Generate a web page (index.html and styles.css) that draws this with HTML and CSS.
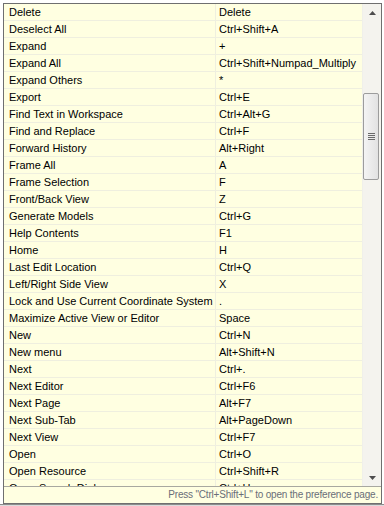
FILE: index.html
```
<!DOCTYPE html>
<html lang="en">
<head>
  <meta charset="UTF-8">
  <title>Key Assist</title>
  <link rel="stylesheet" href="styles.css">
</head>
<body>

  <div class="popup">
    <div class="cuerpo">
      <div class="lista">
        <table class="teclas">
          <tr><td>Delete</td><td>Delete</td></tr>
          <tr><td>Deselect All</td><td>Ctrl+Shift+A</td></tr>
          <tr><td>Expand</td><td>+</td></tr>
          <tr><td>Expand All</td><td>Ctrl+Shift+Numpad_Multiply</td></tr>
          <tr><td>Expand Others</td><td>*</td></tr>
          <tr><td>Export</td><td>Ctrl+E</td></tr>
          <tr><td>Find Text in Workspace</td><td>Ctrl+Alt+G</td></tr>
          <tr><td>Find and Replace</td><td>Ctrl+F</td></tr>
          <tr><td>Forward History</td><td>Alt+Right</td></tr>
          <tr><td>Frame All</td><td>A</td></tr>
          <tr><td>Frame Selection</td><td>F</td></tr>
          <tr><td>Front/Back View</td><td>Z</td></tr>
          <tr><td>Generate Models</td><td>Ctrl+G</td></tr>
          <tr><td>Help Contents</td><td>F1</td></tr>
          <tr><td>Home</td><td>H</td></tr>
          <tr><td>Last Edit Location</td><td>Ctrl+Q</td></tr>
          <tr><td>Left/Right Side View</td><td>X</td></tr>
          <tr><td>Lock and Use Current Coordinate System</td><td>.</td></tr>
          <tr><td>Maximize Active View or Editor</td><td>Space</td></tr>
          <tr><td>New</td><td>Ctrl+N</td></tr>
          <tr><td>New menu</td><td>Alt+Shift+N</td></tr>
          <tr><td>Next</td><td>Ctrl+.</td></tr>
          <tr><td>Next Editor</td><td>Ctrl+F6</td></tr>
          <tr><td>Next Page</td><td>Alt+F7</td></tr>
          <tr><td>Next Sub-Tab</td><td>Alt+PageDown</td></tr>
          <tr><td>Next View</td><td>Ctrl+F7</td></tr>
          <tr><td>Open</td><td>Ctrl+O</td></tr>
          <tr><td>Open Resource</td><td>Ctrl+Shift+R</td></tr>
          <tr><td>Open Search Dialog</td><td>Ctrl+H</td></tr>
        </table>
      </div>

      <!-- Barra de desplazamiento -->
      <div class="scroll">
        <div class="flecha">
          <svg width="7" height="4" viewBox="0 0 7 4"><path d="M3.5 0 L7 4 L0 4 Z" fill="#4d4d4d"/></svg>
        </div>
        <div class="pista">
          <div class="pulgar">
            <span></span><span></span><span></span><span></span>
          </div>
        </div>
        <div class="flecha">
          <svg width="7" height="4" viewBox="0 0 7 4"><path d="M0 0 L7 0 L3.5 4 Z" fill="#4d4d4d"/></svg>
        </div>
      </div>
    </div>

    <div class="estado">Press "Ctrl+Shift+L" to open the preference page.</div>
  </div>

  <div class="fondo"></div>

</body>
</html>
```
FILE: styles.css
```
body {
  margin: 0;
  padding: 3px 0 0 3px;
  background-color: #ffffff;
  font-family: Tahoma, 'Liberation Sans', sans-serif;
  font-size: 11px;
  overflow: hidden;
}

.popup {
  width: 377px;
  height: 499px;
  border: 1px solid #6f6f6f;
  background-color: #ffffe1;
  display: flex;
  flex-direction: column;
}

.cuerpo {
  display: flex;
  height: 482px;
}

.lista {
  width: 358px;
  overflow: hidden;
}

.teclas {
  border-collapse: collapse;
  width: 358px;
  table-layout: fixed;
}

.teclas td {
  height: 16px;
  padding: 0;
  line-height: 16px;
  border-bottom: 1px solid #efefdf;
  white-space: nowrap;
  overflow: hidden;
  color: #000;
}

.teclas td:first-child {
  width: 206px;
  padding-left: 5px;
  border-right: 1px solid #efefdf;
}

.teclas td:last-child {
  padding-left: 3px;
}

/* Barra de desplazamiento */
.scroll {
  width: 18px;
  display: flex;
  flex-direction: column;
  background-color: #f4f3ee;
  border-left: 1px solid #f0f0ea;
}

.flecha {
  height: 17px;
  display: flex;
  justify-content: center;
  align-items: center;
}

.pista {
  flex: 1;
}

.pulgar {
  margin-top: 72px;
  width: 14px;
  height: 85px;
  border: 1px solid #9c9c9c;
  border-radius: 2px;
  background: linear-gradient(to right, #f4f4f4, #e2e2e2);
  display: flex;
  flex-direction: column;
  justify-content: center;
  align-items: center;
  gap: 1px;
}

.pulgar span {
  width: 7px;
  height: 1px;
  background-color: #6a6a6a;
}

.estado {
  border-top: 1px solid #a8a8a0;
  height: 16px;
  line-height: 16px;
  text-align: right;
  padding-right: 3px;
  font-size: 10px;
  letter-spacing: -0.2px;
  color: #6a6e78;
}

.fondo {
  height: 4px;
  margin-left: -3px;
  border-top: 1px solid #8c8c8c;
  background-color: #dcdcdc;
}
```
